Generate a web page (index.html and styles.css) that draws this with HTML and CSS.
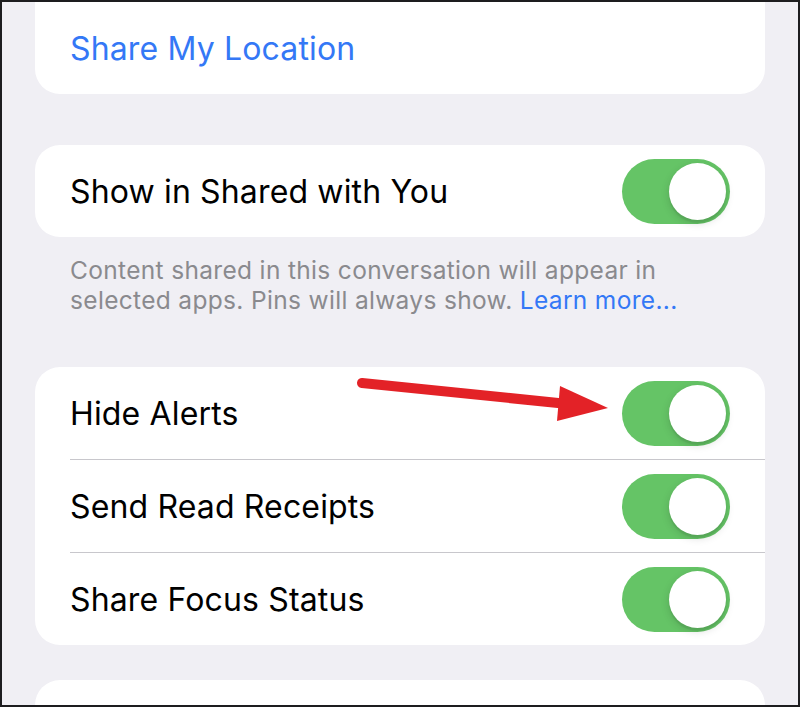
FILE: index.html
```html
<!DOCTYPE html>
<html lang="en">
<head>
<meta charset="utf-8">
<title>Conversation Details</title>
<link rel="stylesheet" href="styles.css">
</head>
<body>
<div class="frame">
  <div class="screen">
    <section class="card card-top">
      <div class="row">
        <div class="row-body"><span class="label link">Share My Location</span></div>
      </div>
    </section>

    <section class="card card-shared">
      <div class="row">
        <div class="row-body">
          <span class="label">Show in Shared with You</span>
          <span class="switch"><span class="knob"></span></span>
        </div>
      </div>
    </section>
    <p class="footnote">Content shared in this conversation will appear in selected apps. Pins will always show. <span class="link">Learn more...</span></p>

    <section class="card card-options">
      <div class="row">
        <div class="row-body">
          <span class="label">Hide Alerts</span>
          <span class="switch"><span class="knob"></span></span>
        </div>
      </div>
      <div class="row">
        <div class="row-body">
          <span class="label">Send Read Receipts</span>
          <span class="switch"><span class="knob"></span></span>
        </div>
      </div>
      <div class="row">
        <div class="row-body">
          <span class="label">Share Focus Status</span>
          <span class="switch"><span class="knob"></span></span>
        </div>
      </div>
    </section>

    <section class="card card-bottom"></section>
  </div>

  <!-- annotation arrow pointing at the Hide Alerts switch -->
  <svg class="pointer" viewBox="0 0 796 703" width="796" height="703" aria-hidden="true">
    <line x1="360" y1="381" x2="566" y2="402" stroke="#e32227" stroke-width="10" stroke-linecap="round"/>
    <polygon points="558,384 606,406 555,419" fill="#e32227"/>
  </svg>
</div>
</body>
</html>
```
FILE: styles.css
```css
* {
  box-sizing: border-box;
}

html, body {
  margin: 0;
  padding: 0;
  background: #ffffff;
}

.frame {
  position: relative;
  width: 800px;
  height: 707px;
  border: 2px solid #1d1d1f;
  background: #f0eff4;
  overflow: hidden;
  font-family: "Inter", "Noto Sans", sans-serif;
}

.screen {
  display: flex;
  flex-direction: column;
  padding: 0 33px;
}

.card {
  background: #ffffff;
  border-radius: 25px;
  overflow: hidden;
}

.card-top {
  border-radius: 0 0 25px 25px;
}

.card-top .row-body {
  height: 92px;
}

.card-shared {
  margin-top: 51px;
}

.card-bottom {
  margin-top: 35px;
  height: 60px;
  border-radius: 25px 25px 0 0;
}

.row {
  padding-left: 35px;
}

.row-body {
  display: flex;
  align-items: center;
  justify-content: space-between;
  height: 92px;
  padding-right: 35px;
}

.row + .row .row-body {
  height: 93px;
  border-top: 1px solid #c8c7cc;
}

.label {
  padding-top: 1px;
  font-size: 32px;
  letter-spacing: 0.15px;
  color: #000000;
}

.link {
  color: #3478f6;
}

.footnote {
  margin: 19px 0 52px;
  padding: 0 35px;
  font-size: 24.5px;
  letter-spacing: 0.33px;
  line-height: 29.5px;
  color: #8a8a8e;
}

.switch {
  position: relative;
  display: block;
  width: 108px;
  height: 65px;
  border-radius: 33px;
  background: #65c466;
}

.knob {
  position: absolute;
  top: 4px;
  right: 4px;
  width: 57px;
  height: 57px;
  border-radius: 50%;
  background: #ffffff;
  box-shadow: 0 3px 8px rgba(0, 0, 0, 0.15), 0 3px 1px rgba(0, 0, 0, 0.06);
}

.pointer {
  position: absolute;
  left: 0;
  top: 0;
  pointer-events: none;
}
```
